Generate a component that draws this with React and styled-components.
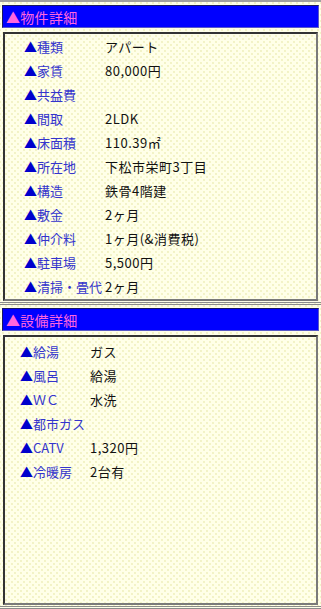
import React from 'react';
import styled, { createGlobalStyle } from 'styled-components';

const GlobalStyle = createGlobalStyle`
  html, body {
    margin: 0;
    padding: 0;
  }
  body {
    width: 321px;
    height: 609px;
    overflow: hidden;
    font-family: "Noto Sans CJK JP", "DejaVu Sans", sans-serif;
    background-color: #ffffe8;
    background-image:
      radial-gradient(circle, #ececb4 0.6px, transparent 0.9px),
      radial-gradient(circle, #ececb4 0.6px, transparent 0.9px);
    background-size: 6px 6px;
    background-position: 0 0, 3px 3px;
  }
`;

const Page = styled.div`
  display: flex;
  flex-direction: column;
  height: 609px;
  box-sizing: border-box;
  border-top: 2px solid #a0a0a0;
`;

const Section = styled.section`
  display: flex;
  flex-direction: column;
  flex: ${p => (p.$grow ? 1 : 'none')};
  padding: 3px 2px 0 2px;
  border-bottom: 3px double #8c8c8c;
`;

const Heading = styled.h2`
  margin: 0;
  height: 23px;
  box-sizing: border-box;
  display: flex;
  align-items: center;
  padding-left: 3px;
  background: #0000ff;
  border: 1px solid;
  border-color: #1a1a60 #5858c8 #5858c8 #1a1a60;
  color: #ff66dd;
  font-size: 14px;
  font-weight: normal;
  letter-spacing: 0.3px;
`;

const Box = styled.div`
  flex: 1;
  margin: 4px 1px 1px 1px;
  border: 2px solid;
  border-color: #333 #7a7a7a #7a7a7a #333;
  padding: ${p => p.$pad};
`;

const Table = styled.div`
  display: grid;
  grid-template-columns: ${p => p.$label}px 1fr;
  grid-auto-rows: 24px;
  align-items: center;
  font-size: 13px;
`;

const Label = styled.div`
  color: #3434cc;
  white-space: nowrap;
  &::before {
    content: '▲';
    color: #0000cc;
  }
`;

const Value = styled.div`
  color: #111;
  white-space: nowrap;
  letter-spacing: 0.5px;
`;

const details = [
  ['種類', 'アパート'],
  ['家賃', '80,000円'],
  ['共益費', ''],
  ['間取', '2LDK'],
  ['床面積', '110.39㎡'],
  ['所在地', '下松市栄町3丁目'],
  ['構造', '鉄骨4階建'],
  ['敷金', '2ヶ月'],
  ['仲介料', '1ヶ月(&消費税)'],
  ['駐車場', '5,500円'],
  ['清掃・畳代', '2ヶ月'],
];

const equipment = [
  ['給湯', 'ガス'],
  ['風呂', '給湯'],
  ['ＷＣ', '水洗'],
  ['都市ガス', ''],
  ['CATV', '1,320円'],
  ['冷暖房', '2台有'],
];

function InfoTable({ rows, label }) {
  return (
    <Table $label={label}>
      {rows.map(([k, v]) => (
        <React.Fragment key={k}>
          <Label>{k}</Label>
          <Value>{v}</Value>
        </React.Fragment>
      ))}
    </Table>
  );
}

export default function App() {
  return (
    <>
      <GlobalStyle />
      <Page>
        <Section>
          <Heading>▲物件詳細</Heading>
          <Box $pad="0 0 1px 19px">
            <InfoTable rows={details} label={81} />
          </Box>
        </Section>
        <Section $grow>
          <Heading>▲設備詳細</Heading>
          <Box $pad="2px 0 0 15px">
            <InfoTable rows={equipment} label={70} />
          </Box>
        </Section>
      </Page>
    </>
  );
}
